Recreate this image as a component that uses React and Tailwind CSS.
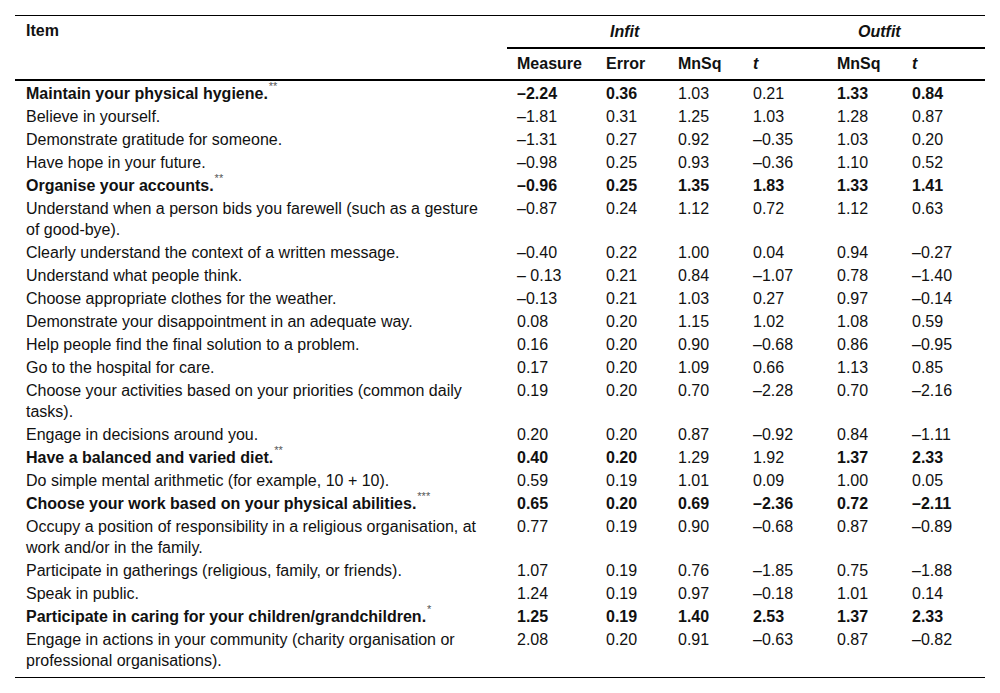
import React from "react";

const rows = [
  { item: "Maintain your physical hygiene.", mark: "**", bold: true, vals: ["–2.24", "0.36", "1.03", "0.21", "1.33", "0.84"], b: [1, 1, 0, 0, 1, 1] },
  { item: "Believe in yourself.", vals: ["–1.81", "0.31", "1.25", "1.03", "1.28", "0.87"] },
  { item: "Demonstrate gratitude for someone.", vals: ["–1.31", "0.27", "0.92", "–0.35", "1.03", "0.20"] },
  { item: "Have hope in your future.", vals: ["–0.98", "0.25", "0.93", "–0.36", "1.10", "0.52"] },
  { item: "Organise your accounts.", mark: "**", bold: true, vals: ["–0.96", "0.25", "1.35", "1.83", "1.33", "1.41"], b: [1, 1, 1, 1, 1, 1] },
  { item: "Understand when a person bids you farewell (such as a gesture of good-bye).", vals: ["–0.87", "0.24", "1.12", "0.72", "1.12", "0.63"] },
  { item: "Clearly understand the context of a written message.", vals: ["–0.40", "0.22", "1.00", "0.04", "0.94", "–0.27"] },
  { item: "Understand what people think.", vals: ["– 0.13", "0.21", "0.84", "–1.07", "0.78", "–1.40"] },
  { item: "Choose appropriate clothes for the weather.", vals: ["–0.13", "0.21", "1.03", "0.27", "0.97", "–0.14"] },
  { item: "Demonstrate your disappointment in an adequate way.", vals: ["0.08", "0.20", "1.15", "1.02", "1.08", "0.59"] },
  { item: "Help people find the final solution to a problem.", vals: ["0.16", "0.20", "0.90", "–0.68", "0.86", "–0.95"] },
  { item: "Go to the hospital for care.", vals: ["0.17", "0.20", "1.09", "0.66", "1.13", "0.85"] },
  { item: "Choose your activities based on your priorities (common daily tasks).", vals: ["0.19", "0.20", "0.70", "–2.28", "0.70", "–2.16"] },
  { item: "Engage in decisions around you.", vals: ["0.20", "0.20", "0.87", "–0.92", "0.84", "–1.11"] },
  { item: "Have a balanced and varied diet.", mark: "**", bold: true, vals: ["0.40", "0.20", "1.29", "1.92", "1.37", "2.33"], b: [1, 1, 0, 0, 1, 1] },
  { item: "Do simple mental arithmetic (for example, 10 + 10).", vals: ["0.59", "0.19", "1.01", "0.09", "1.00", "0.05"] },
  { item: "Choose your work based on your physical abilities.", mark: "***", bold: true, vals: ["0.65", "0.20", "0.69", "–2.36", "0.72", "–2.11"], b: [1, 1, 1, 1, 1, 1] },
  { item: "Occupy a position of responsibility in a religious organisation, at work and/or in the family.", vals: ["0.77", "0.19", "0.90", "–0.68", "0.87", "–0.89"] },
  { item: "Participate in gatherings (religious, family, or friends).", vals: ["1.07", "0.19", "0.76", "–1.85", "0.75", "–1.88"] },
  { item: "Speak in public.", vals: ["1.24", "0.19", "0.97", "–0.18", "1.01", "0.14"] },
  { item: "Participate in caring for your children/grandchildren.", mark: "*", bold: true, vals: ["1.25", "0.19", "1.40", "2.53", "1.37", "2.33"], b: [1, 1, 1, 1, 1, 1] },
  { item: "Engage in actions in your community (charity organisation or professional organisations).", vals: ["2.08", "0.20", "0.91", "–0.63", "0.87", "–0.82"] },
];

const App = () => {
  return (
    <div className="w-[1000px] h-[693px] bg-white px-[15px] pt-[15px] text-[16px] leading-[21px] text-[#111] font-['Liberation_Sans',Arial,sans-serif]">
      <table className="w-[970px] table-fixed border-collapse">
        <colgroup>
          <col className="w-[492px]" />
          <col className="w-[89px]" />
          <col className="w-[72px]" />
          <col className="w-[75px]" />
          <col className="w-[84px]" />
          <col className="w-[75px]" />
          <col className="w-[83px]" />
        </colgroup>
        <thead>
          <tr className="border-t border-black">
            <th rowSpan={2} className="align-top text-left font-bold pl-[11px] pt-[4px] border-b-2 border-black">
              Item
            </th>
            <th colSpan={4} className="h-[32px] text-left font-bold italic pl-[103px] border-b-2 border-black">
              Infit
            </th>
            <th colSpan={2} className="text-left font-bold italic pl-[31px] border-b-2 border-black">
              Outfit
            </th>
          </tr>
          <tr className="border-b-2 border-black">
            <th className="h-[32px] text-left font-bold pl-[10px]">Measure</th>
            <th className="text-left font-bold pl-[10px]">Error</th>
            <th className="text-left font-bold pl-[10px]">MnSq</th>
            <th className="text-left font-bold italic pl-[10px]">t</th>
            <th className="text-left font-bold pl-[10px]">MnSq</th>
            <th className="text-left font-bold italic pl-[10px]">t</th>
          </tr>
        </thead>
        <tbody className="border-b border-black">
          {rows.map((r, i) => (
            <tr key={i} className="align-top">
              <td className={`pl-[11px] pr-[26px] py-[1px] ${i === 0 ? "pt-[2px]" : ""} ${i === rows.length - 1 ? "pb-[6px]" : ""} ${r.bold ? "font-bold" : ""}`}>
                {r.item}
                {r.mark && (
                  <sup className="ml-[1px] text-[11px] font-normal text-[#555] align-[3px] leading-none">{r.mark}</sup>
                )}
              </td>
              {r.vals.map((v, j) => (
                <td
                  key={j}
                  className={`pl-[10px] py-[1px] whitespace-nowrap ${i === 0 ? "pt-[2px]" : ""} ${r.b && r.b[j] ? "font-bold" : ""}`}
                >
                  {v}
                </td>
              ))}
            </tr>
          ))}
        </tbody>
      </table>
    </div>
  );
};

export default App;
